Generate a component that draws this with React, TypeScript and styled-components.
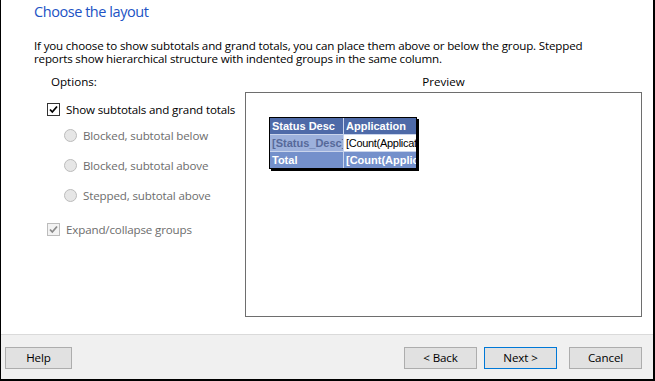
import React from "react";
import styled, { createGlobalStyle } from "styled-components";

const Global = createGlobalStyle`
  html, body { margin: 0; padding: 0; background: #fff; }
  body { font-family: "Open Sans", "Noto Sans", sans-serif; }
  * { box-sizing: border-box; }
`;

const Frame = styled.div`
  width: 655px;
  height: 381px;
  display: flex;
  flex-direction: column;
  background: #fff;
  border-left: 1px solid #000;
  border-right: 2px solid #000;
  border-bottom: 2px solid #000;
  font-size: 12px;
  color: #000;
`;

const Main = styled.div`
  flex: 1;
  padding: 1px 0 0 33px;
  display: flex;
  flex-direction: column;
`;

const Title = styled.div`
  font-size: 14.5px;
  line-height: 21px;
  color: #2152c4;
  font-weight: 400;
  letter-spacing: -0.45px;
`;

const Description = styled.p`
  margin: 17px 0 0 0;
  width: 556px;
  line-height: 13px;
  font-size: 11.6px;
  letter-spacing: -0.17px;
`;

const Columns = styled.div`
  display: grid;
  grid-template-columns: 211px 397px;
  margin-top: 9px;
`;

const LeftCol = styled.div`
  display: flex;
  flex-direction: column;
`;

const OptionsLabel = styled.div`
  margin-left: 17px;
  line-height: 16px;
  font-size: 11.6px;
  margin-bottom: 11px;
`;

const Row = styled.label<{ $indent?: boolean; $gap?: number }>`
  display: flex;
  align-items: center;
  gap: 6px;
  height: 16px;
  margin-left: ${(p) => (p.$indent ? 30 : 13)}px;
  margin-top: ${(p) => p.$gap ?? 0}px;
  font-size: 11.6px;
  letter-spacing: -0.15px;
`;

const RowText = styled.span<{ $disabled?: boolean }>`
  color: ${(p) => (p.$disabled ? "#6d6d6d" : "#000")};
`;

const CheckBox = styled.span<{ $disabled?: boolean }>`
  width: 13px;
  height: 13px;
  border: 1px solid ${(p) => (p.$disabled ? "#bcbcbc" : "#333")};
  background: ${(p) => (p.$disabled ? "#f3f3f3" : "#fff")};
  display: flex;
  align-items: center;
  justify-content: center;
  flex-shrink: 0;
`;

const Radio = styled.span`
  width: 13px;
  height: 13px;
  border-radius: 50%;
  border: 1px solid #bcbcbc;
  background: #e6e6e6;
  flex-shrink: 0;
`;

const RightCol = styled.div`
  display: flex;
  flex-direction: column;
`;

const PreviewLabel = styled.div`
  text-align: center;
  line-height: 16px;
  font-size: 11.6px;
  margin-bottom: 2px;
`;

const PreviewBox = styled.div`
  height: 225px;
  border: 1px solid #6e6e6e;
  padding: 24px 0 0 23px;
`;

const Table = styled.div`
  display: inline-grid;
  grid-template-columns: 73px 72px;
  border: 1px solid #000;
  box-shadow: 2px 2px 0 #000;
  background: #c9d4ec;
  gap: 1px;
  font-family: "Liberation Sans", Arial, sans-serif;
  font-size: 11px;
`;

const Cell = styled.div<{ $bg: string; $color: string; $bold?: boolean }>`
  height: 16px;
  line-height: 16px;
  padding-left: 2px;
  background: ${(p) => p.$bg};
  color: ${(p) => p.$color};
  font-weight: ${(p) => (p.$bold ? 700 : 400)};
  white-space: nowrap;
  overflow: hidden;
  letter-spacing: ${(p) => (p.$bold ? "0" : "-0.3px")};
`;

const Footer = styled.div`
  height: 45px;
  border-top: 1px solid #dadada;
  background: #f0f0f0;
  display: flex;
  align-items: center;
  padding: 0 11px 0 4px;
`;

const Spacer = styled.div`
  flex: 1;
`;

const Button = styled.button<{ $primary?: boolean; $gap?: number; $w?: number }>`
  width: ${(p) => p.$w ?? 73}px;
  height: 22px;
  margin-left: ${(p) => p.$gap ?? 0}px;
  margin-top: 1px;
  border: 1px solid ${(p) => (p.$primary ? "#0078d7" : "#adadad")};
  background: #e1e1e1;
  font-family: "Open Sans", "Noto Sans", sans-serif;
  font-size: 11.6px;
  color: #000;
  padding: 0;
  letter-spacing: -0.1px;
`;

const Check = ({ color }: { color: string }) => (
  <svg width="11" height="11" viewBox="0 0 11 11">
    <path d="M2 5.5 L4.3 8 L9 2.5" fill="none" stroke={color} strokeWidth="1.8" />
  </svg>
);

export default function App() {
  return (
    <>
      <Global />
      <Frame>
        <Main>
          <Title>Choose the layout</Title>
          <Description>
            If you choose to show subtotals and grand totals, you can place them above or below the group. Stepped
            reports show hierarchical structure with indented groups in the same column.
          </Description>
          <Columns>
            <LeftCol>
              <OptionsLabel>Options:</OptionsLabel>
              <Row>
                <CheckBox>
                  <Check color="#000" />
                </CheckBox>
                <RowText>Show subtotals and grand totals</RowText>
              </Row>
              <Row $indent $gap={10}>
                <Radio />
                <RowText $disabled>Blocked, subtotal below</RowText>
              </Row>
              <Row $indent $gap={14}>
                <Radio />
                <RowText $disabled>Blocked, subtotal above</RowText>
              </Row>
              <Row $indent $gap={14}>
                <Radio />
                <RowText $disabled>Stepped, subtotal above</RowText>
              </Row>
              <Row $gap={18}>
                <CheckBox $disabled>
                  <Check color="#8a8a8a" />
                </CheckBox>
                <RowText $disabled>Expand/collapse groups</RowText>
              </Row>
            </LeftCol>
            <RightCol>
              <PreviewLabel>Preview</PreviewLabel>
              <PreviewBox>
                <Table>
                  <Cell $bg="#4e6aa8" $color="#fff" $bold>Status Desc</Cell>
                  <Cell $bg="#4e6aa8" $color="#fff" $bold>Application</Cell>
                  <Cell $bg="#9db1dc" $color="#56699a" $bold>[Status_Desc]</Cell>
                  <Cell $bg="#fff" $color="#000">[Count(Application)]</Cell>
                  <Cell $bg="#7490cb" $color="#fff" $bold>Total</Cell>
                  <Cell $bg="#7490cb" $color="#fff" $bold>[Count(Application)]</Cell>
                </Table>
              </PreviewBox>
            </RightCol>
          </Columns>
        </Main>
        <Footer>
          <Button $w={67}>Help</Button>
          <Spacer />
          <Button>&lt; Back</Button>
          <Button $primary $gap={7}>Next &gt;</Button>
          <Button $gap={12}>Cancel</Button>
        </Footer>
      </Frame>
    </>
  );
}
